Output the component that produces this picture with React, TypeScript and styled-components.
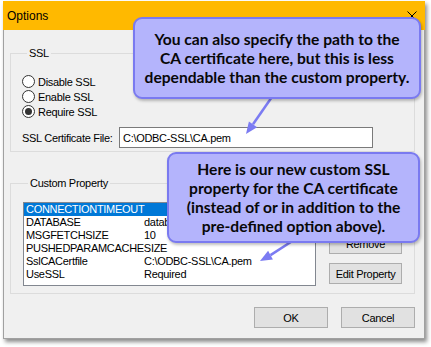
import React from "react";
import styled, { createGlobalStyle } from "styled-components";

const Global = createGlobalStyle`
  html, body { margin: 0; padding: 0; background: #ffffff; }
  body { font-family: "Liberation Sans", Arial, sans-serif; color: #000; }
`;

const Stage = styled.div`
  position: relative;
  width: 431px;
  height: 347px;
  padding: 1px 0 0 3px;
  box-sizing: border-box;
  overflow: hidden;
`;

const Window = styled.div`
  width: 422px;
  height: 338px;
  display: flex;
  flex-direction: column;
  box-shadow: 2px 3px 4px rgba(0, 0, 0, 0.45);
`;

const TitleBar = styled.div`
  height: 29px;
  flex: none;
  background: #ffb900;
  display: flex;
  align-items: center;
  justify-content: space-between;
  padding: 0 8px 0 4px;
  font-size: 12px;
`;

const Body = styled.div`
  flex: 1;
  background: #f0f0f0;
  border: 1px solid #a0a0a0;
  border-top: none;
  padding: 16px 9px 0 6px;
  display: flex;
  flex-direction: column;
  font-size: 11px;
  letter-spacing: -0.3px;
`;

const Group = styled.fieldset<{ $mt: number; $pad: string }>`
  margin: ${(p) => p.$mt}px 0 0 0;
  padding: ${(p) => p.$pad};
  border: 1px solid #dcdcdc;
  min-width: 0;
`;

const Legend = styled.legend`
  margin-left: 5px;
  padding: 0 2px;
  line-height: 14px;
  font-size: 11px;
`;

const RadioRow = styled.div`
  display: flex;
  align-items: center;
  height: 15px;
  gap: 3px;
`;

const RadioCircle = styled.span<{ $checked?: boolean }>`
  width: 13px;
  height: 13px;
  box-sizing: border-box;
  border-radius: 50%;
  border: 1px solid #333;
  background: #fff;
  display: flex;
  align-items: center;
  justify-content: center;
  &::after {
    content: "";
    width: 7px;
    height: 7px;
    border-radius: 50%;
    background: #333;
    display: ${(p) => (p.$checked ? "block" : "none")};
  }
`;

const CertRow = styled.div`
  display: flex;
  align-items: center;
  margin-top: 8px;
`;

const FieldLabel = styled.span`
  width: 97px;
`;

const TextBox = styled.div`
  width: 254px;
  height: 21px;
  box-sizing: border-box;
  border: 1px solid #7a7a7a;
  background: #fff;
  padding-left: 3px;
  display: flex;
  align-items: center;
`;

const PropRow = styled.div`
  display: flex;
  gap: 13px;
`;

const ListBox = styled.div`
  width: 293px;
  height: 84px;
  box-sizing: border-box;
  border: 1px solid #828790;
  background: #fff;
`;

const ListRow = styled.div<{ $selected?: boolean }>`
  display: grid;
  grid-template-columns: 118px 1fr;
  height: 13px;
  line-height: 13px;
  padding-left: 2px;
  white-space: nowrap;
  background: ${(p) => (p.$selected ? "#0078d7" : "transparent")};
  color: ${(p) => (p.$selected ? "#fff" : "#000")};
`;

const ButtonColumn = styled.div`
  display: flex;
  flex-direction: column;
  gap: 9px;
  margin-top: 1px;
`;

const Button = styled.button<{ $w: number }>`
  width: ${(p) => p.$w}px;
  height: 21px;
  box-sizing: border-box;
  padding: 0;
  border: 1px solid #adadad;
  background: #e1e1e1;
  font-family: "Liberation Sans", Arial, sans-serif;
  font-size: 11px;
  letter-spacing: -0.3px;
  color: #000;
`;

const Footer = styled.div`
  display: flex;
  justify-content: flex-end;
  gap: 13px;
  margin-top: 13px;
`;

const Callout = styled.div<{ $x: number; $y: number; $w: number; $h: number }>`
  position: absolute;
  left: ${(p) => p.$x}px;
  top: ${(p) => p.$y}px;
  width: ${(p) => p.$w}px;
  height: ${(p) => p.$h}px;
  box-sizing: border-box;
  background: #b4b4fc;
  border: 2px solid #7a7af0;
  border-radius: 9px;
  box-shadow: 1px 2px 3px rgba(0, 0, 0, 0.25);
  display: flex;
  align-items: center;
  justify-content: center;
  text-align: center;
  font-family: Lato, "Open Sans", sans-serif;
  font-weight: 700;
  font-size: 15.6px;
  line-height: 19px;
  color: #080808;
  z-index: 2;
  white-space: nowrap;
`;

const ArrowLayer = styled.svg`
  position: absolute;
  left: 0;
  top: 0;
  z-index: 1;
  pointer-events: none;
`;

const rows: { name: string; value: string; selected?: boolean }[] = [
  { name: "CONNECTIONTIMEOUT", value: "", selected: true },
  { name: "DATABASE", value: "database" },
  { name: "MSGFETCHSIZE", value: "10" },
  { name: "PUSHEDPARAMCACHESIZE", value: "" },
  { name: "SslCACertfile", value: "C:\\ODBC-SSL\\CA.pem" },
  { name: "UseSSL", value: "Required" },
];

export default function App() {
  return (
    <>
      <Global />
      <Stage>
        <Window>
          <TitleBar>
            <span>Options</span>
            <svg width="10" height="10" viewBox="0 0 10 10">
              <path d="M0.5 0.5 L9.5 9.5 M9.5 0.5 L0.5 9.5" stroke="#000" strokeWidth="1" />
            </svg>
          </TitleBar>
          <Body>
            <Group $mt={0} $pad="14px 0 3px 11px">
              <Legend>SSL</Legend>
              <RadioRow>
                <RadioCircle />
                <span>Disable SSL</span>
              </RadioRow>
              <RadioRow>
                <RadioCircle />
                <span>Enable SSL</span>
              </RadioRow>
              <RadioRow>
                <RadioCircle $checked />
                <span>Require SSL</span>
              </RadioRow>
              <CertRow>
                <FieldLabel>SSL Certificate File:</FieldLabel>
                <TextBox>C:\ODBC-SSL\CA.pem</TextBox>
              </CertRow>
            </Group>
            <Group $mt={24} $pad="12px 0 7px 12px">
              <Legend>Custom Property</Legend>
              <PropRow>
                <ListBox>
                  {rows.map((r) => (
                    <ListRow key={r.name} $selected={r.selected}>
                      <span>{r.name}</span>
                      <span>{r.value}</span>
                    </ListRow>
                  ))}
                </ListBox>
                <ButtonColumn>
                  <Button $w={73}>Add</Button>
                  <Button $w={73}>Remove</Button>
                  <Button $w={73}>Edit Property</Button>
                </ButtonColumn>
              </PropRow>
            </Group>
            <Footer>
              <Button $w={74}>OK</Button>
              <Button $w={74}>Cancel</Button>
            </Footer>
          </Body>
        </Window>
        <ArrowLayer width="431" height="347" viewBox="0 0 431 347">
          <g stroke="#7b7bf2" strokeWidth="2.5" fill="#7b7bf2">
            <line x1="274" y1="94" x2="253" y2="124.3" />
            <polygon points="246,134 257.1,127.2 248.9,121.4" stroke="none" />
            <line x1="297" y1="238" x2="270.5" y2="255.1" />
            <polygon points="260,261 272.9,259.5 268.1,250.7" stroke="none" />
          </g>
        </ArrowLayer>
        <Callout $x={133} $y={17} $w={288} $h={82}>
          <div>
            You can also specify the path to the
            <br />
            CA certificate here, but this is less
            <br />
            dependable than the custom property.
          </div>
        </Callout>
        <Callout $x={167} $y={152} $w={253} $h={91}>
          <div>
            Here is our new custom SSL
            <br />
            property for the CA certificate
            <br />
            (instead of or in addition to the
            <br />
            pre-defined option above).
          </div>
        </Callout>
      </Stage>
    </>
  );
}
